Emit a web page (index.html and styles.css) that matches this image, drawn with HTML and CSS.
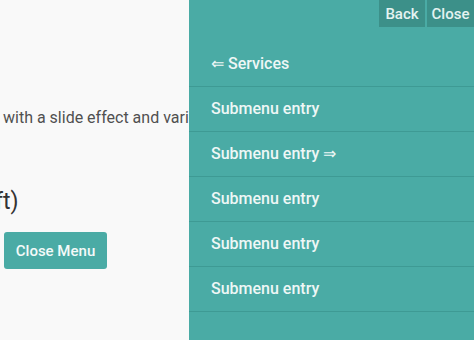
FILE: index.html
```html
<!DOCTYPE html>
<html>
<head>
<meta name="viewport" content="width=device-width, initial-scale=1">
<link rel="stylesheet" href="styles.css">
</head>
<body>

  <!-- Page content, pushed left by the open menu -->
  <div class="page">
    <div class="page-inner">
      <p class="intro">with a slide effect and various options</p>
      <h2 class="title">ft)</h2>
      <button class="btn">Close Menu</button>
    </div>
  </div>

  <!-- Slide menu -->
  <nav class="menu">
    <div class="menu-controls">
      <button class="control">Back</button>
      <button class="control">Close</button>
    </div>
    <ul class="menu-list">
      <li><a href="#">&lArr; Services</a></li>
      <li><a href="#">Submenu entry</a></li>
      <li><a href="#">Submenu entry &rArr;</a></li>
      <li><a href="#">Submenu entry</a></li>
      <li><a href="#">Submenu entry</a></li>
      <li><a href="#">Submenu entry</a></li>
    </ul>
  </nav>

</body>
</html>
```

FILE: styles.css
```css
* {box-sizing: border-box}

html, body {
  height: 100%;
}

body {
  margin: 0;
  display: flex;
  background-color: #f9f9f9;
  font-family: Roboto, "Liberation Sans", Arial, sans-serif;
  overflow: hidden;
}

/* Page content on the left */
.page {
  width: 189px;
  flex: none;
  overflow: hidden;
}

.page-inner {
  width: 400px;
  padding-left: 3px;
}

.intro {
  margin: 108px 0 0;
  font-size: 16px;
  line-height: 20px;
  color: #505050;
  white-space: nowrap;
}

.title {
  margin: 61px 0 0 -8px;
  font-size: 23px;
  font-weight: 400;
  line-height: 26px;
  color: #333;
}

.btn {
  margin: 17px 0 0 1px;
  width: 103px;
  height: 37px;
  border: none;
  border-radius: 3px;
  background-color: #4aaba5;
  color: #f4faf9;
  font-family: inherit;
  font-size: 15px;
  font-weight: 500;
  cursor: pointer;
}

/* The menu panel */
.menu {
  flex: 1;
  background-color: #4aaba5;
}

.menu-controls {
  display: flex;
  justify-content: flex-end;
  gap: 2px;
}

.control {
  width: 46px;
  height: 27px;
  padding: 0;
  border: none;
  background-color: #3c9089;
  color: #e4f3f1;
  font-family: inherit;
  font-size: 15px;
  font-weight: 500;
  cursor: pointer;
}

.control:last-child {
  width: 47px;
}

.menu-list {
  list-style: none;
  margin: 15px 0 0;
  padding: 0;
}

.menu-list li {
  border-bottom: 1px solid #3e9a94;
}

.menu-list a {
  display: block;
  height: 44px;
  line-height: 44px;
  padding-left: 22px;
  color: #eef7f6;
  font-size: 16px;
  font-weight: 500;
  text-decoration: none;
}
```
